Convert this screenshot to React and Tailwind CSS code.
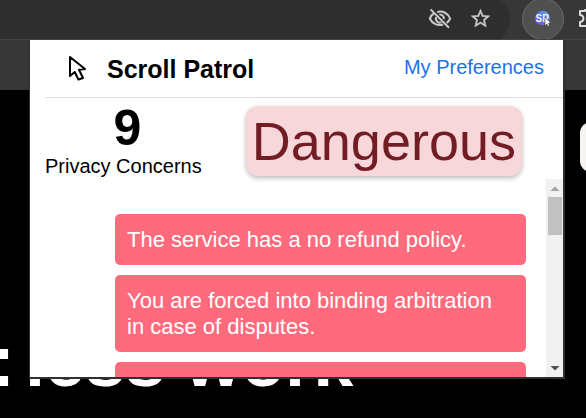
import React from "react";

const concerns = [
  "The service has a no refund policy.",
  "You are forced into binding arbitration in case of disputes.",
  "The service can delete your account without prior notice.",
];

function HiddenEyeIcon() {
  return (
    <svg width="24" height="24" viewBox="0 0 24 24" fill="none" stroke="#c9c9c9" strokeWidth="2" aria-hidden="true">
      <path d="M9.2 5.1A10.6 10.6 0 0 1 22.2 11.5a11.6 11.6 0 0 1-3.5 4.4M6.2 6.2a11.5 11.5 0 0 0-4.4 5.3c2.5 5.3 8 7.7 13.3 6" />
      <path d="M11.4 7.6a4 4 0 0 1 4.5 4.6M8.2 10.2a4 4 0 0 0 5.2 5.2" />
      <path d="M2.6 2.4 21 20.8" />
    </svg>
  );
}

function StarIcon() {
  return (
    <svg width="23" height="23" viewBox="0 0 24 24" fill="#c9c9c9" stroke="#c9c9c9" strokeWidth="0.3" aria-hidden="true">
      <path d="M22 9.24l-7.19-.62L12 2 9.19 8.63 2 9.24l5.46 4.73L5.82 21 12 17.27 18.18 21l-1.63-7.03L22 9.24zM12 15.4l-3.76 2.27 1-4.28-3.32-2.88 4.38-.38L12 6.1l1.71 4.04 4.38.38-3.32 2.88 1 4.28L12 15.4z" />
    </svg>
  );
}

function PatrolBadge() {
  return (
    <svg width="20" height="20" viewBox="0 0 20 20" aria-hidden="true">
      <defs>
        <linearGradient id="badge" x1="0" y1="1" x2="1" y2="0">
          <stop offset="0" stopColor="#9858dc" />
          <stop offset="0.5" stopColor="#4b74dc" />
          <stop offset="1" stopColor="#63b7f0" />
        </linearGradient>
      </defs>
      <circle cx="9.500" cy="9" r="7.3" fill="url(#badge)" />
      <text x="2.500" y="12.500" fontSize="10" fontWeight="700" fill="#f4f4f4" fontFamily="Liberation Sans, sans-serif">
        SP
      </text>
      <path d="M12 8.5v8l1.8-1.6 1.2 2.3 1.5-.8-1.1-2.2 2.5-.3z" fill="#fff" stroke="#333" strokeWidth="0.5" />
    </svg>
  );
}

function PuzzleIcon() {
  return (
    <svg width="24" height="20" viewBox="0 0 24 20" fill="none" stroke="#dedede" strokeWidth="2" strokeLinejoin="round" aria-hidden="true">
      <path d="M3 2h5a2.5 2.5 0 0 1 5 0h6v5a2.5 2.5 0 0 1 0 5v5H3v-4a3 3 0 0 0 0-7z" />
    </svg>
  );
}

function PointerIcon() {
  return (
    <svg width="22" height="30" viewBox="0 0 22 30" fill="#fff" stroke="#000" strokeWidth="2" strokeLinejoin="round" aria-hidden="true">
      <path d="M5 4 20 16 14 16.800 18 25 13.400 26.500 9.800 19 5 23z" />
    </svg>
  );
}

function BrowserBar() {
  return (
    <header className="flex h-10 items-center overflow-hidden border-b border-[#444] bg-[#373737] pb-[2px]">
      <div className="flex h-12 flex-1 items-center justify-end gap-[17px] rounded-r-full bg-[#2e2e2e] pr-[18px]">
        <button type="button" aria-label="Tracking protection"><HiddenEyeIcon /></button>
        <button type="button" aria-label="Bookmark"><StarIcon /></button>
      </div>
      <div className="flex w-[76px] shrink-0 items-center gap-[13px] pl-3">
        <button type="button" aria-label="Scroll Patrol extension" className="flex size-[42px] shrink-0 items-center justify-center rounded-full border border-[#6b6b6b] bg-[#505050]">
          <PatrolBadge />
        </button>
        <button type="button" aria-label="Extensions" className="shrink-0"><PuzzleIcon /></button>
      </div>
    </header>
  );
}

function ScrollTrack() {
  return (
    <div className="flex w-[17px] shrink-0 flex-col items-center bg-[#f1f1f1]" aria-hidden="true">
      <svg width="17" height="18" viewBox="0 0 17 18"><path d="M4.500 12h9L9 7.500z" fill="#a3a3a3" /></svg>
      <div className="h-[38px] w-[14px] bg-[#c1c1c1]" />
      <div className="flex-1" />
      <svg width="17" height="17" viewBox="0 0 17 17"><path d="M4.500 6h9L9 10.500z" fill="#505050" /></svg>
    </div>
  );
}

function Popup() {
  return (
    <main className="absolute top-10 right-[21px] bottom-[39px] left-[29px] flex flex-col overflow-hidden border-r-2 border-b-2 border-l border-[#303030] bg-white text-black">
      <div className="ml-[15px] flex h-[58px] shrink-0 items-center border-b border-[#dedede] pr-[19px] pb-[2px] pl-5">
        <PointerIcon />
        <h1 className="ml-5 flex-1 pt-[3px] text-[25px] leading-8 font-bold">Scroll Patrol</h1>
        <a href="#preferences" className="pb-[2px] text-[20px] leading-6 text-[#1a73e8]">My Preferences</a>
      </div>
      <section className="flex h-[81px] shrink-0 items-start justify-between pr-[41px] pl-[15px]">
        <div className="flex flex-col items-center pt-1">
          <strong className="pl-2 text-[50px] leading-[52px]">9</strong>
          <span className="text-[20px] leading-6">Privacy Concerns</span>
        </div>
        <div className="mt-2 rounded-xl bg-[#f8d7da] px-[6px] text-[54px] leading-[70px] text-[#721c24] shadow-[0_2px_5px_rgba(0,0,0,0.28)]">
          Dangerous
        </div>
      </section>
      <section className="flex min-h-0 flex-1">
        <ul className="flex min-h-0 flex-1 flex-col gap-[10px] overflow-hidden pt-[35px] pr-5 pl-[85px]">
          {concerns.map((text) => (
            <li key={text} className="shrink-0 rounded-[5px] bg-[#ff6b7c] px-3 pt-[13px] pb-3 text-[22px] leading-[26px] text-white">
              {text}
            </li>
          ))}
        </ul>
        <ScrollTrack />
      </section>
    </main>
  );
}

export default function App() {
  return (
    <div className="relative flex h-screen flex-col overflow-hidden bg-black font-['Liberation_Sans',Arial,sans-serif]">
      <BrowserBar />
      <div className="h-[50px] shrink-0 bg-[#363636]" />
      <div className="flex flex-1 flex-col justify-between">
        <div className="mt-8 -mr-4 h-[50px] w-[22px] self-end rounded-xl bg-[#f7f5f2]" />
        <p className="-ml-[9px] flex gap-[10px] pb-[21px] text-[72px] leading-[72px] font-bold whitespace-nowrap text-white">
          <span>:</span>
          <span>less work</span>
        </p>
      </div>
      <Popup />
    </div>
  );
}
